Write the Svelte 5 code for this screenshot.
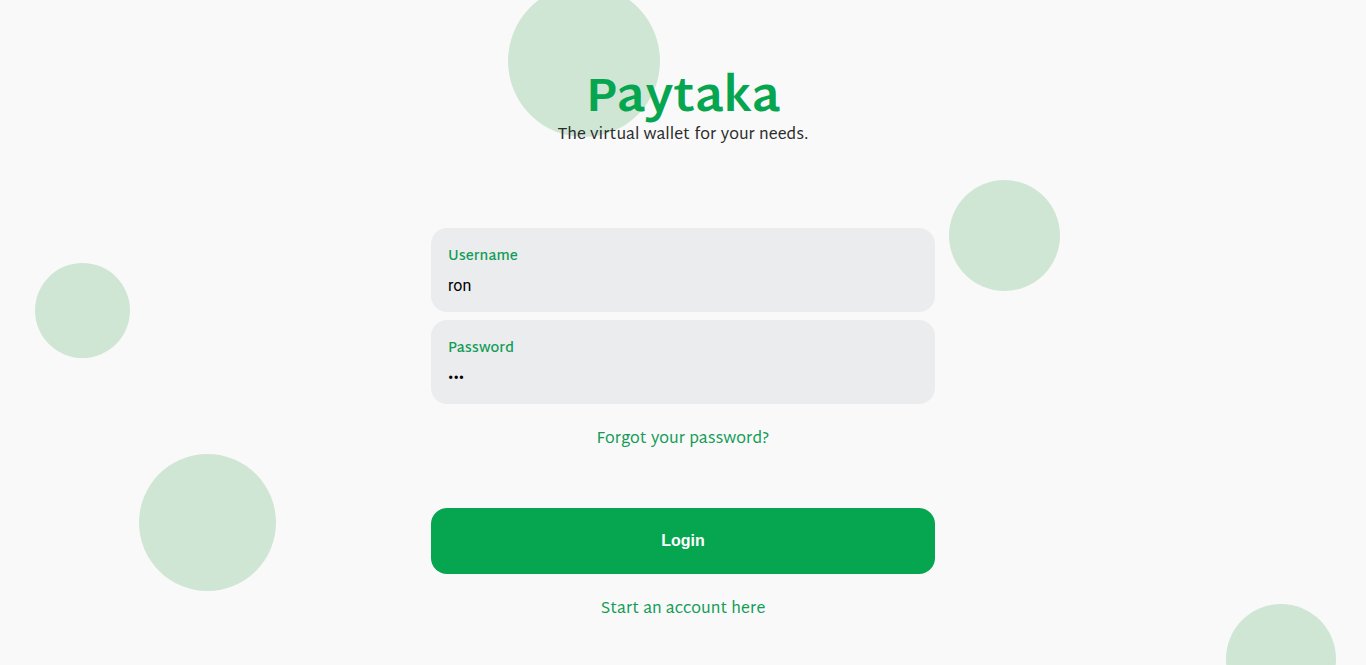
<script>
  let username = $state('ron');
  let password = $state('ron');
  const bubbles = ['top', 'right', 'left', 'lower', 'corner'];
</script>

<div class="page">
  <div class="bubbles" aria-hidden="true">
    {#each bubbles as name}
      <span class="bubble {name}"></span>
    {/each}
  </div>

  <main>
    <header>
      <h1>Paytaka</h1>
      <p>The virtual wallet for your needs.</p>
    </header>

    <form onsubmit={(e) => e.preventDefault()}>
      <div class="field">
        <label for="username">Username</label>
        <input id="username" type="text" bind:value={username} />
      </div>
      <div class="field">
        <label for="password">Password</label>
        <input id="password" type="password" bind:value={password} />
      </div>
      <a class="forgot" href="#forgot">Forgot your password?</a>
      <button type="submit">Login</button>
    </form>

    <a class="signup" href="#signup">Start an account here</a>
  </main>
</div>

<style>
  :global(body) {
    background: #f9f9f9;
  }

  .page {
    position: relative;
    min-height: 100vh;
    box-sizing: border-box;
    padding: 76px 16px 40px;
    overflow: hidden;
    background: #f9f9f9;
    color: #2b2b2b;
    font-family: "Martel Sans", "Open Sans", "Noto Sans", sans-serif;
    font-size: 16px;
    line-height: 24px;
  }

  .bubbles {
    position: absolute;
    inset: 0;
  }

  .bubble {
    position: absolute;
    border-radius: 50%;
    background: #cfe6d5;
  }

  .top {
    top: -15px;
    left: calc(50% - 175px);
    width: 152px;
    height: 152px;
  }

  .right {
    top: 180px;
    right: 306px;
    width: 111px;
    height: 111px;
  }

  .left {
    top: 263px;
    left: 35px;
    width: 95px;
    height: 95px;
  }

  .lower {
    top: 454px;
    left: 139px;
    width: 137px;
    height: 137px;
  }

  .corner {
    top: 604px;
    right: 30px;
    width: 110px;
    height: 110px;
  }

  main {
    position: relative;
    display: flex;
    flex-direction: column;
    align-items: center;
    max-width: 504px;
    margin: 0 auto;
  }

  header {
    text-align: center;
    margin-bottom: 80px;
  }

  h1 {
    margin: 0;
    color: #06a550;
    font-size: 48px;
    font-weight: 700;
    line-height: 48px;
  }

  p {
    margin: 0;
  }

  form {
    display: flex;
    flex-direction: column;
    align-items: center;
    width: 100%;
    gap: 8px;
  }

  .field {
    display: flex;
    flex-direction: column;
    box-sizing: border-box;
    width: 100%;
    padding: 17px 17px 11px;
    border-radius: 16px;
    background: #ebecee;
  }

  label {
    color: #129c57;
    font-size: 14px;
    font-weight: 600;
  }

  input {
    width: 100%;
    box-sizing: border-box;
    height: 32px;
    padding: 0;
    border: 0;
    outline: 0;
    background: transparent;
    color: #000;
    font-family: Roboto, sans-serif;
    font-size: 16px;
  }

  a {
    color: #129c57;
    text-decoration: none;
  }

  .forgot {
    margin: 16px 0 48px;
  }

  button {
    width: 100%;
    height: 66px;
    border: 0;
    border-radius: 16px;
    background: #06a550;
    color: #fff;
    font-family: "Liberation Sans", Arial, sans-serif;
    font-size: 16px;
    font-weight: 700;
    cursor: pointer;
  }

  .signup {
    margin-top: 24px;
  }
</style>
